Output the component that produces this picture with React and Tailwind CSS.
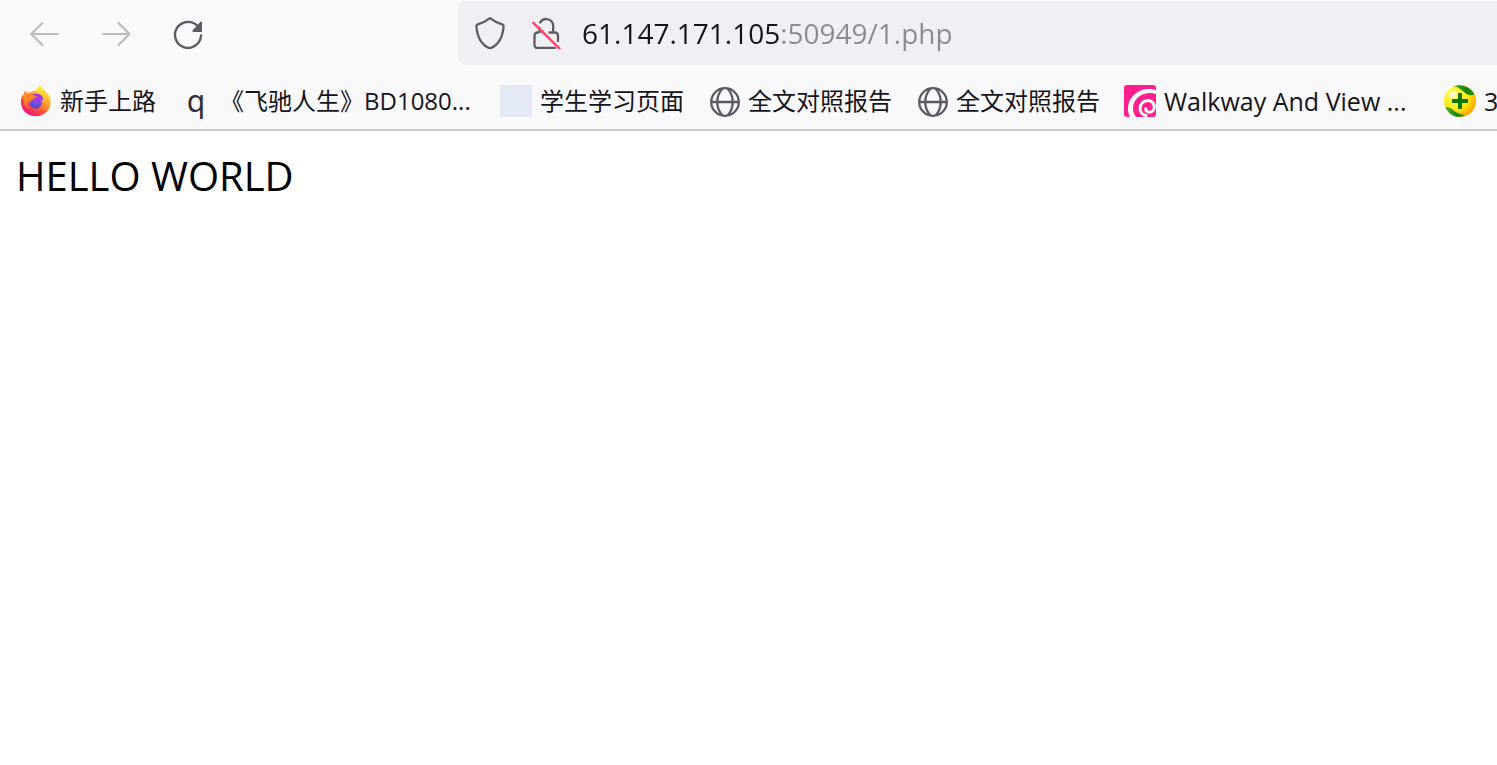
import { useState } from 'react'

const stroke = { fill: 'none', strokeLinecap: 'round', strokeLinejoin: 'round' }

function ArrowIcon({ flip }) {
  return (
    <svg className="w-8 h-8" viewBox="0 0 32 32" stroke="#bbbbc0" strokeWidth="2.200" {...stroke}>
      {flip ? (
        <path d="M3 17h26M18.500 6l11 11-11 11" />
      ) : (
        <path d="M29.500 17H3M14.500 6L3.200 17l11.300 11" />
      )}
    </svg>
  )
}

function ReloadIcon() {
  return (
    <svg className="w-8 h-8" viewBox="0 0 32 32">
      <path d="M25.500 9A13 13 0 1 0 29 18.500" stroke="#5b5b66" strokeWidth="2.400" {...stroke} />
      <path d="M30 5.600V14a1 1 0 0 1-1 1h-7.600c-1 0-1.400-1-.7-1.700l7.600-8.400c.7-.7 1.700-.3 1.700.7z" fill="#5b5b66" />
    </svg>
  )
}

function ShieldIcon() {
  return (
    <svg className="w-8 h-8 shrink-0" viewBox="0 0 32 32" stroke="#5b5b60" strokeWidth="2.200" {...stroke}>
      <path d="M16 1.200c-3.600 2.800-8 5-12.200 6.200-1 .3-1.500 1-1.400 2C3.200 19.500 7 28 16 31.500 25 28 28.800 19.500 29.600 9.400c.1-1-.4-1.700-1.400-2C24 6.200 19.600 4 16 1.200z" />
    </svg>
  )
}

function InsecureLockIcon() {
  return (
    <svg className="w-8 h-8 shrink-0" viewBox="0 0 32 32" {...stroke}>
      <g stroke="#5b5b60" strokeWidth="2.300">
        <path d="M10.200 5.500A7 7 0 0 1 23.200 8.500v6M19.500 15.500H25a3 3 0 0 1 3 3v5.500M8.500 15.500H7.500a3 3 0 0 0-3 3V28a3 3 0 0 0 3 3H25" />
        <path d="M9.500 11v3.500h3" />
      </g>
      <path d="M3.300 5.800L29.500 31.500" stroke="#ff3f67" strokeWidth="2.400" />
    </svg>
  )
}

function FirefoxIcon() {
  return (
    <svg className="w-8 h-8 shrink-0" viewBox="0 0 32 32">
      <defs>
        <linearGradient id="ff-body" x1="0.800" y1="0.100" x2="0.250" y2="0.950">
          <stop offset="0" stopColor="#fff44f" />
          <stop offset="0.350" stopColor="#ffb02a" />
          <stop offset="0.650" stopColor="#ff5a36" />
          <stop offset="1" stopColor="#f0127e" />
        </linearGradient>
        <linearGradient id="ff-flame" x1="0.500" y1="0" x2="0.500" y2="1">
          <stop offset="0" stopColor="#fff14c" />
          <stop offset="0.500" stopColor="#ffc52c" />
          <stop offset="1" stopColor="#ff7139" stopOpacity="0" />
        </linearGradient>
        <radialGradient id="ff-globe" cx="0.600" cy="0.200" r="0.800">
          <stop offset="0" stopColor="#b13bf0" />
          <stop offset="0.500" stopColor="#7a4ddf" />
          <stop offset="1" stopColor="#4a4fc4" />
        </radialGradient>
        <linearGradient id="ff-head" x1="0" y1="0" x2="0.600" y2="1">
          <stop offset="0" stopColor="#ff9a1f" />
          <stop offset="1" stopColor="#ff6b2c" />
        </linearGradient>
      </defs>
      <path d="M5.600 5.400c.2 1.300.8 2.200 1.700 3 1-.9 2.600-1.300 4-1.200 1.300-1.300 3-1.700 4.700-1.600.9-2.200 2.400-4 4.700-5.300.4 2.200 2 3.400 3.700 5.200 1 1 1.700 2.200 2.100 3.500l.9-1.600c2.200 2.300 3.600 6 3.400 9.800C30.500 25 24.600 31 16.200 31.200 8 31.300 1.300 25.500.9 17.400.8 14 1.500 11.500 3 9.600l.5 1.500c.2-2.100.9-4.200 2.100-5.700z" fill="url(#ff-body)" />
      <path d="M16 6c.8-2.400 2.400-4.400 4.700-5.700.4 2.200 2 3.400 3.700 5.200 3 3 4.500 8 2.500 13.500-.8 2.300-2.500 4.500-5 5.500 2-4 2-8.500.1-12C20.600 9.500 17.500 9 16 6z" fill="url(#ff-flame)" />
      <circle cx="15.700" cy="17.500" r="6.200" fill="url(#ff-globe)" />
      <path d="M12 9.500c3-2 8-1.200 10 1.600 1 1.300 1.300 3 1 4.800-1-1.600-2.200-2.300-3.800-2.500z" fill="#a838ea" />
      <path d="M5.600 5.400c.2 1.300.8 2.200 1.700 3 1.500-.9 3-1.100 4.200-.9-.1 1.500.3 2.300 1.500 3l4 .8c.5 1.400-3.300 1.700-4.300 3.200-1 .8-2 1.500-2.600 2.500-1.500.2-2.400-.5-2.800.5-.6 1.600.3 4.600 2 6.300C5 22 2.500 17.500 3.500 11.100c.2-2.100.9-4.200 2.100-5.700z" fill="url(#ff-head)" />
    </svg>
  )
}

function LetterIcon() {
  return (
    <span className="w-8 h-8 shrink-0 flex items-center justify-center text-[30px] leading-8 text-[#2f2f33] font-['Noto_Sans',sans-serif]">
      q
    </span>
  )
}

function BlankIcon() {
  return <span className="w-8 h-8 shrink-0 bg-[#e3eaf6]" />
}

function GlobeIcon() {
  return (
    <svg className="w-8 h-8 shrink-0" viewBox="0 0 32 32" stroke="#5b5b66" strokeWidth="2.300" fill="none">
      <circle cx="17" cy="17" r="13.800" />
      <path d="M3 17h28M14.500 3.500C7.500 11 7.500 23 14.500 30.500M19.500 3.500c7 7.500 7 19.500 0 27" />
    </svg>
  )
}

function SwirlIcon() {
  return (
    <svg className="w-8 h-8 shrink-0" viewBox="0 0 32 32">
      <path d="M3 0h26a3 3 0 0 1 3 3v26a3 3 0 0 1-3 3H3a3 3 0 0 1-3-3V3a3 3 0 0 1 3-3z" fill="#ff1f8f" />
      <path d="M32 5.500C28 3.800 22 3.500 17 5.500 9 8.500 4 15.500 4 23.500c0 3.300.6 6 1.800 8.500H12c-1.800-2.500-3-5-3-8.500 0-6 3.500-11.500 9.500-14C23 7.600 28 7.500 32 9z" fill="#fff" />
      <path d="M22 30.500c-3.500-.5-6-3.500-6-7 0-4.500 3.500-8 7.800-8 3.700 0 6.500 2.800 6.500 6.300 0 3.200-2.300 5.400-5 5.400-2.300 0-3.800-1.600-3.500-3.500" stroke="#fff" strokeWidth="3" fill="none" strokeLinecap="round" />
    </svg>
  )
}

function PlusBallIcon() {
  return (
    <svg className="w-8 h-8 shrink-0" viewBox="0 0 32 32">
      <defs>
        <radialGradient id="ball" cx="0.280" cy="0.300" r="0.750">
          <stop offset="0" stopColor="#fffff0" />
          <stop offset="0.250" stopColor="#fff53a" />
          <stop offset="0.700" stopColor="#ffe00a" />
          <stop offset="1" stopColor="#ffa800" />
        </radialGradient>
        <linearGradient id="ball-band" x1="0" y1="0" x2="1" y2="0">
          <stop offset="0" stopColor="#4fb41c" />
          <stop offset="0.600" stopColor="#0f8408" />
          <stop offset="1" stopColor="#2b9a0e" />
        </linearGradient>
      </defs>
      <circle cx="16" cy="16" r="16" fill="url(#ball)" />
      <path d="M10 1.200C18-1.500 27 2.500 30.500 9.500c-4 1.500-7.500.3-10.500-2.500-3.500-3.300-6.500-4.800-10-5.800z" fill="url(#ball-band)" />
      <path d="M1.500 22c3.500 0 6 1.500 9 4 3.200 2.600 6.500 3.600 11 4C14 34.500 4.500 30.500 1.500 22z" fill="url(#ball-band)" />
      <path d="M14 8h4v6h6v4h-6v6h-4v-6H8v-4h6z" fill="#087808" />
    </svg>
  )
}

const bookmarks = [
  { icon: FirefoxIcon, label: '新手上路' },
  { icon: LetterIcon, label: '《飞驰人生》BD1080...', className: 'w-64' },
  { icon: BlankIcon, label: '学生学习页面' },
  { icon: GlobeIcon, label: '全文对照报告' },
  { icon: GlobeIcon, label: '全文对照报告' },
  { icon: SwirlIcon, label: 'Walkway And View ...', className: 'w-64 text-[25px]' },
  { icon: PlusBallIcon, label: '3', className: 'text-[25px]' },
]

function Bookmark({ icon: Icon, label, className = '' }) {
  return (
    <a href="#" className="flex items-center gap-2 shrink-0">
      <Icon />
      <span className={`whitespace-nowrap leading-8 ${className}`}>{label}</span>
    </a>
  )
}

export default function App() {
  const [url, setUrl] = useState('61.147.171.105:50949/1.php')

  return (
    <div className="min-h-screen bg-white overflow-hidden font-['Open_Sans','Noto_Sans_CJK_SC',sans-serif]">
      <header className="bg-[#f9f9fb] border-b-2 border-[#cccccc]">
        <div className="flex items-center pt-px">
          <nav className="flex gap-2 pl-3 w-[458px] shrink-0">
            <button type="button" aria-label="Back" disabled className="w-16 h-16 flex items-center justify-center">
              <ArrowIcon />
            </button>
            <button type="button" aria-label="Forward" disabled className="w-16 h-16 flex items-center justify-center">
              <ArrowIcon flip />
            </button>
            <button type="button" aria-label="Reload" className="w-16 h-16 flex items-center justify-center">
              <ReloadIcon />
            </button>
          </nav>
          <div className="flex-1 min-w-0 h-16 flex items-center gap-6 pl-4 bg-[#f0f0f4] rounded-l-lg">
            <ShieldIcon />
            <InsecureLockIcon />
            {/* host is dark, port and path are dimmed */}
            <input
              type="text"
              aria-label="Address"
              value={url}
              onChange={(e) => setUrl(e.target.value)}
              className="flex-1 min-w-0 h-12 -ml-1 outline-none text-[28px] text-transparent bg-clip-text bg-[linear-gradient(90deg,#15141a_199px,#8a8a8f_199px)]"
            />
          </div>
        </div>
        <div className="flex items-center gap-6 h-16 pt-2 pl-5 overflow-hidden text-2xl text-[#15141a]">
          {bookmarks.map((b, i) => (
            <Bookmark key={i} {...b} />
          ))}
        </div>
      </header>
      <main className="p-4 text-[40px] leading-[58px] text-black">HELLO WORLD</main>
    </div>
  )
}
